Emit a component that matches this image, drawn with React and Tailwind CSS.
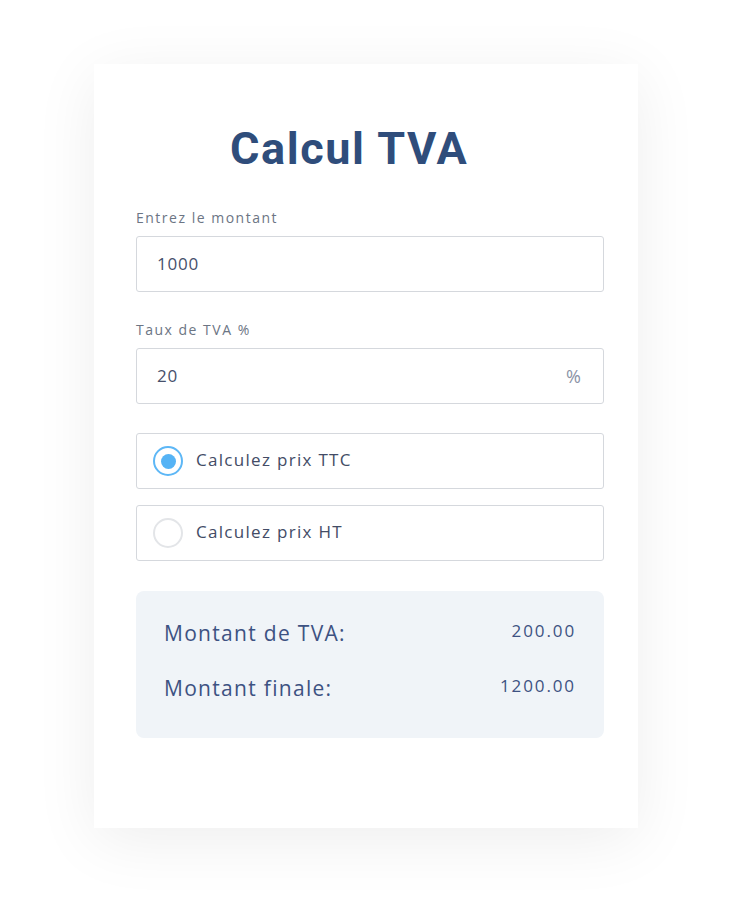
import React, { useState } from 'react';

function Field({ label, value, suffix }) {
  return (
    <div className="flex flex-col">
      <label className="text-[14px] leading-5 tracking-[1.5px] text-[#6c7584] mb-2">{label}</label>
      <div className="h-[56px] border border-[#d5d8dd] rounded-[3px] flex items-center pl-5 pr-[22px]">
        <span className="flex-1 text-[17px] tracking-[0.8px] text-[#47506b]">{value}</span>
        {suffix && <span className="text-[18px] text-[#8a93a6]">{suffix}</span>}
      </div>
    </div>
  );
}

function RadioOption({ label, checked, onClick }) {
  return (
    <button
      onClick={onClick}
      className="h-[56px] w-full border border-[#d5d8dd] rounded-[3px] flex items-center pl-4 text-left focus:outline-none"
    >
      {checked ? (
        <span className="w-[30px] h-[30px] rounded-full border-2 border-[#5db7f6] flex items-center justify-center">
          <span className="w-[15px] h-[15px] rounded-full bg-[#55b3f5]" />
        </span>
      ) : (
        <span className="w-[30px] h-[30px] rounded-full border-2 border-[#e3e5e8]" />
      )}
      <span className="ml-[13px] -mt-[2px] text-[17px] tracking-[1.3px] text-[#434c66]">{label}</span>
    </button>
  );
}

export default function App() {
  const [mode, setMode] = useState('ttc');
  const amount = 1000;
  const rate = 20;
  const tva = mode === 'ttc' ? amount * rate / 100 : amount - amount / (1 + rate / 100);
  const total = mode === 'ttc' ? amount + tva : amount - tva;

  return (
    <div className="min-h-[906px] bg-white flex justify-center pt-[64px]" style={{ fontFamily: '"Open Sans", sans-serif' }}>
      <div className="w-[544px] h-[764px] bg-white shadow-[0_12px_60px_rgba(0,0,0,0.07)] pl-[42px] pr-[34px] pt-[63px]">
        <h1 className="text-[45px] leading-[44px] font-bold tracking-[1.6px] text-[#2f4d7b] pl-[94px]" style={{ fontFamily: 'Roboto, sans-serif' }}>
          Calcul TVA
        </h1>
        <div className="mt-[37px]">
          <Field label="Entrez le montant" value={amount} />
        </div>
        <div className="mt-[28px]">
          <Field label="Taux de TVA %" value={rate} suffix="%" />
        </div>
        <div className="mt-[29px] flex flex-col gap-4">
          <RadioOption label="Calculez prix TTC" checked={mode === 'ttc'} onClick={() => setMode('ttc')} />
          <RadioOption label="Calculez prix HT" checked={mode === 'ht'} onClick={() => setMode('ht')} />
        </div>
        <div className="mt-[30px] h-[147px] bg-[#f0f4f8] rounded-lg px-7 pt-[26px] flex flex-col gap-[23px]">
          <div className="flex justify-between items-start">
            <span className="text-[21px] leading-8 tracking-[1.3px] text-[#3d5282]">Montant de TVA:</span>
            <span className="text-[17px] leading-7 tracking-[1.9px] text-[#3d5282]">{tva.toFixed(2)}</span>
          </div>
          <div className="flex justify-between items-start">
            <span className="text-[21px] leading-8 tracking-[1.3px] text-[#3d5282]">Montant finale:</span>
            <span className="text-[17px] leading-7 tracking-[1.9px] text-[#3d5282]">{total.toFixed(2)}</span>
          </div>
        </div>
      </div>
    </div>
  );
}
